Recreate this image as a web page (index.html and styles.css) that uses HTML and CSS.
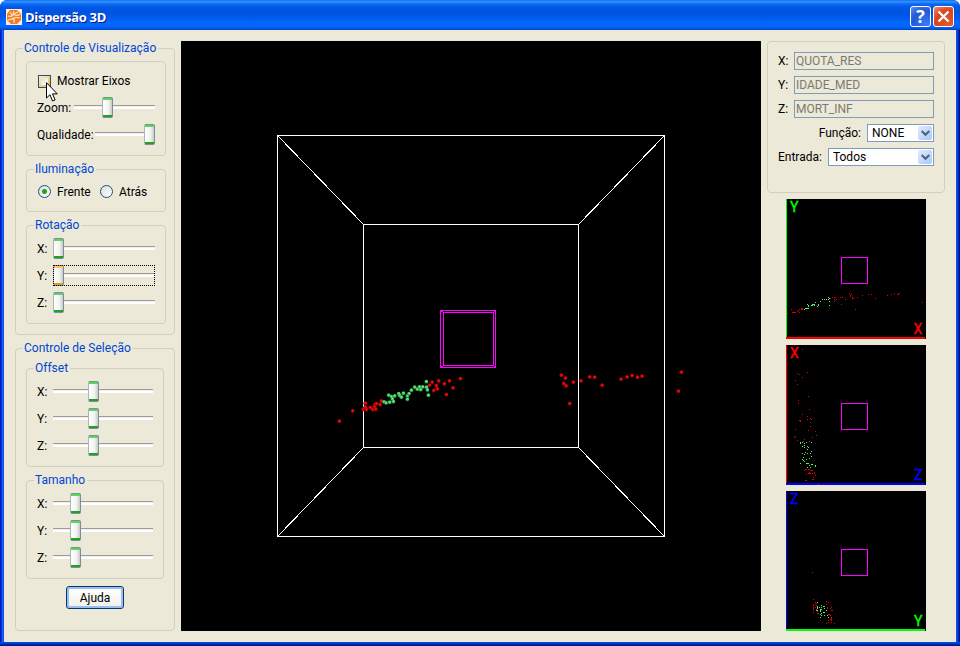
FILE: index.html
```html
<!DOCTYPE html>
<html lang="pt">
<head>
<meta charset="utf-8">
<title>Dispersão 3D</title>
<link rel="stylesheet" href="styles.css">
</head>
<body>
<div class="window">
  <header class="titlebar">
    <svg class="app-icon" width="16" height="16" viewBox="0 0 16 16"><rect width="16" height="16" fill="#f8eedc"/><path d="M4 1h7l4 4v6l-4 4H5l-4-4V5z" fill="#f47b20"/><path d="M2 7q3 1 5-1t5-3M8 2q-2 3 1 4t5-1M2 11q4-1 6-2t6 0M7 9q2 2 1 5M4 3l2 3" fill="none" stroke="#ffe9c8" stroke-width="1.1"/></svg>
    <h1 class="title">Dispersão 3D</h1>
    <button class="caption help" aria-label="Ajuda"><span>?</span></button>
    <button class="caption close" aria-label="Fechar"><svg width="19" height="19" viewBox="0 0 19 19"><path d="M4.500 4.500l10 10M14.500 4.500l-10 10" stroke="#fff" stroke-width="2.300"/></svg></button>
  </header>
  <main class="content">
    <aside class="left">
      <section class="group view">
        <h2 class="legend"><span class="t-view">Controle de Visualização</span></h2>
        <div class="group inner general">
          <label class="row check-row"><i class="checkbox"></i><span class="t-axes">Mostrar Eixos</span>
            <svg class="cursor" width="13" height="21" viewBox="0 0 13 21"><path d="M.5.700v15.300l3.500-3.300 2.500 6.300 2.600-1.100-2.600-6h4.800z" fill="#fff" stroke="#000"/></svg></label>
          <div class="row"><span class="name t-zoom">Zoom:</span><div class="slider zoom"><i class="thumb"></i></div></div>
          <div class="row"><span class="name t-quality">Qualidade:</span><div class="slider quality"><i class="thumb"></i></div></div>
        </div>
        <div class="group inner light">
          <h3 class="legend"><span class="t-light">Iluminação</span></h3>
          <div class="radios"><i class="radio on"></i><span class="t-front">Frente</span><i class="radio"></i><span class="t-back">Atrás</span></div>
        </div>
        <div class="group inner axes rotation">
          <h3 class="legend"><span class="t-rot">Rotação</span></h3>
          <div class="row"><span class="axis">X:</span><div class="slider"><i class="thumb"></i></div></div>
          <div class="row"><span class="axis">Y:</span><div class="slider focused"><i class="thumb hot"></i></div></div>
          <div class="row"><span class="axis">Z:</span><div class="slider"><i class="thumb"></i></div></div>
        </div>
      </section>
      <section class="group selection">
        <h2 class="legend"><span class="t-sel">Controle de Seleção</span></h2>
        <div class="group inner axes offset">
          <h3 class="legend"><span class="t-off">Offset</span></h3>
          <div class="row"><span class="axis">X:</span><div class="slider"><i class="thumb"></i></div></div>
          <div class="row"><span class="axis">Y:</span><div class="slider"><i class="thumb"></i></div></div>
          <div class="row"><span class="axis">Z:</span><div class="slider"><i class="thumb"></i></div></div>
        </div>
        <div class="group inner axes size">
          <h3 class="legend"><span class="t-size">Tamanho</span></h3>
          <div class="row"><span class="axis">X:</span><div class="slider"><i class="thumb"></i></div></div>
          <div class="row"><span class="axis">Y:</span><div class="slider"><i class="thumb"></i></div></div>
          <div class="row"><span class="axis">Z:</span><div class="slider"><i class="thumb"></i></div></div>
        </div>
        <button class="button">Ajuda</button>
      </section>
    </aside>
    <svg class="scene" width="580" height="590" viewBox="0 0 580 590">
      <defs>
        <radialGradient id="red" cx=".55" cy=".4" r=".6"><stop offset="0" stop-color="#ff1616"/><stop offset=".55" stop-color="#cc0000"/><stop offset="1" stop-color="#600"/></radialGradient>
        <radialGradient id="green" cx=".55" cy=".4" r=".6"><stop offset="0" stop-color="#70ff8c"/><stop offset=".55" stop-color="#40c060"/><stop offset="1" stop-color="#1c602c"/></radialGradient>
      </defs>
      <g fill="none" stroke="#fff" shape-rendering="crispEdges">
        <rect x="96.500" y="94.500" width="387" height="401"/>
        <rect x="182.500" y="183.500" width="215" height="223"/>
        <path d="M96.500 94.500l86 89M483.500 94.500l-86 89M96.500 495.500l86-89M483.500 495.500l-86-89"/>
      </g>
      <g fill="none" stroke="#f0f" shape-rendering="crispEdges">
        <rect x="259.500" y="269.500" width="55" height="57"/>
        <rect x="262.500" y="271.500" width="50" height="53"/>
        <path d="M259.500 269.500l3 2M314.500 269.500l-2 2M259.500 326.500l3-2M314.500 326.500l-2-2"/>
      </g>
      <g id="spheres"></g>
    </svg>
    <aside class="right">
      <section class="group vars">
        <div class="field"><span class="axis">X:</span><div class="input"><span class="t-quota">QUOTA_RES</span></div></div>
        <div class="field"><span class="axis">Y:</span><div class="input"><span class="t-idade">IDADE_MED</span></div></div>
        <div class="field"><span class="axis">Z:</span><div class="input"><span class="t-mort">MORT_INF</span></div></div>
        <div class="field"><span class="t-func">Função:</span><div class="select short"><span class="t-none">NONE</span><i class="arrow"><svg width="9" height="7" viewBox="0 0 9 7"><path d="M.7 1l3.800 3.800L8.300 1" fill="none" stroke="#4d6185" stroke-width="2.200"/></svg></i></div></div>
        <div class="field"><span class="t-entry">Entrada:</span><div class="select"><span class="t-all">Todos</span><i class="arrow"><svg width="9" height="7" viewBox="0 0 9 7"><path d="M.7 1l3.800 3.800L8.300 1" fill="none" stroke="#4d6185" stroke-width="2.200"/></svg></i></div></div>
      </section>
      <svg class="mini" width="140" height="140"><path class="g" d="M0 0h1v140H0z"/><path class="r" d="M0 138h139v2H0z"/><rect class="cube" x="55.500" y="58.500" width="26" height="26"/><text class="g" x="4" y="13">Y</text><text class="r" x="127.500" y="135">X</text><g id="xy"></g></svg>
      <svg class="mini" width="140" height="140"><path class="r" d="M0 0h1v140H0z"/><path class="b" d="M0 138h139v2H0z"/><rect class="cube" x="55.500" y="58.500" width="26" height="26"/><text class="r" x="4" y="13">X</text><text class="b" x="128" y="135">Z</text><g id="zx"></g></svg>
      <svg class="mini" width="140" height="140"><path class="b" d="M0 0h1v140H0z"/><path class="g" d="M0 138h139v2H0z"/><rect class="cube" x="55.500" y="58.500" width="26" height="26"/><text class="b" x="4" y="13">Z</text><text class="g" x="128" y="135">Y</text><g id="yz"></g></svg>
    </aside>
  </main>
</div>
<script src="plot.js"></script>
</body>
</html>
```
FILE: plot.js
```js
// Each list holds x,y pairs in thirds of a pixel.
const spheres = {
  red: [28,364, 68,333, 100,328, 106,310, 106,322, 109,329, 121,323, 128,329, 134,314, 134,321, 137,328, 139,311, 150,314, 154,303, 298,256, 306,247, 311,272, 319,257, 322,267, 326,243, 343,252, 349,284, 358,243, 369,264,
    391,236, 394,226, 401,251, 406,235, 408,258, 419,311, 430,247, 453,243, 479,231, 494,232, 516,256, 573,238, 591,231, 606,227, 622,232, 636,229, 745,274, 754,217],
  green: [162,306, 168,309, 176,286, 179,307, 184,290, 187,297, 190,305, 194,288, 206,281, 209,287, 214,292, 220,280, 232,298, 232,288, 237,281, 244,271, 254,262, 262,268, 268,261, 272,269, 278,261, 289,245, 289,262, 292,270, 295,286]
};
const plots = {
  xy: {
    red: [4,344,22,340,24,340,27,340,33,334,37,337,40,331,46,328,49,328,46,331,49,331,134,298,140,295,145,295,149,295,145,301,152,301,145,307,163,295,169,295,166,316,178,301,190,283,193,289,196,286,193,292,198,298,202,298,199,295,214,295,229,289,247,286,256,286,268,298,304,289,316,286,325,283,334,286,337,286,340,283,409,310,208,331,16,331,19,340,40,340,34,334],
    green: [55,331,58,328,61,328,64,328,67,328,64,316,67,322,76,319,80,316,83,316,86,316,88,310,95,322,98,316,98,319,103,307,110,301,115,301,121,301,127,301,127,295,130,298,130,307,130,319,67,319,79,319,85,319]
  },
  zx: {
    red: [25,1,49,13,64,82,34,85,40,88,49,97,28,106,34,118,67,154,37,166,37,175,70,193,49,208,64,214,73,220,76,223,64,223,40,226,43,226,43,229,73,232,73,244,28,253,67,256,88,259,91,271,79,277,28,274,25,277,34,286,55,283,70,289,52,289,58,373,61,373,67,373,70,373,55,376,76,376,79,376,70,382,67,385,70,385,73,385,79,385,61,388,85,382,85,385,88,391,82,397,79,403,82,403,58,406,61,406,97,418],
    green: [43,292,43,295,49,292,55,295,61,292,76,292,55,301,49,304,55,307,64,304,67,307,64,313,76,319,49,325,55,328,58,322,64,325,73,325,52,337,61,343,70,340,76,334,49,343,52,346,55,349,43,355,61,355,64,355,67,355,70,361,76,358,79,358,88,361,88,364,64,367,73,367]
  },
  yz: {
    red: [79,244,82,325,88,334,91,337,82,340,88,340,82,343,91,343,82,349,82,352,88,349,82,355,91,355,82,364,94,361,97,367,94,367,121,331,127,334,121,340,124,349,124,352,136,349,133,352,136,358,139,358,127,370,133,373,130,370,136,379,136,382,133,385,127,388,136,388,127,394,121,397,136,394,145,397,136,385],
    green: [94,334,94,346,94,349,100,349,106,343,106,349,91,358,94,358,94,352,103,355,106,355,103,358,103,361,112,346,115,346,115,352,112,364,115,364,121,358,106,367,103,370,106,373,115,373,124,373,103,379,127,379]
  }
};
const add = (id, tag, attrs) => {
  const el = document.createElementNS('http://www.w3.org/2000/svg', tag);
  for (const k in attrs) el.setAttribute(k, attrs[k]);
  document.getElementById(id).append(el);
};
for (const color in spheres) {
  const p = spheres[color];
  for (let i = 0; i < p.length; i += 2)
    add('spheres', 'circle', { cx: 149 + (p[i] + (color === 'red' && i >= 48 && 0)) / 3 + (color === 'red' && i > 48 ? 100 : 0), cy: 259 + p[i + 1] / 3, r: 2, fill: `url(#${color})` });
}
for (const id in plots)
  for (const color in plots[id]) {
    const p = plots[id][color];
    let d = '';
    for (let i = 0; i < p.length; i += 2) d += `M${Math.floor(p[i] / 3)} ${Math.floor(p[i + 1] / 3)}h1v1h-1z`;
    add(id, 'path', { d, fill: color === 'red' ? '#e00000' : '#55f070' });
  }
```
FILE: styles.css
```css
* { box-sizing: border-box; }
body { margin: 0; background: #fff; font: 12px/14px Roboto, "Liberation Sans", sans-serif; color: #000; }
h1, h2, h3 { margin: 0; font: inherit; }
i { display: block; flex: none; }
svg { display: block; flex: none; }
span { white-space: nowrap; }
.window { width: 960px; height: 646px; display: flex; flex-direction: column; background: linear-gradient(90deg, #0019cf 0 1px, #0831d9 1px 2px, #1666ee 2px 3px, #0855dd 3px 957px, #0046e0 957px 958px, #0028b8 958px 959px, #00138c 959px); border-radius: 7px 7px 0 0; overflow: hidden; }
.titlebar { height: 30px; display: flex; align-items: center; padding: 3px 6px 0; background: linear-gradient(#0058e6 0, #3a93ff 1px, #288eff 2px, #0c6cf4 4px, #0058e6 7px, #0053df 12px, #0058ea 17px, #0366fc 22px, #0267ff 26px, #005cec 28px, #0042c4 30px); }
.title { flex: 1; margin-left: 3px; color: #fff; font: 700 13px/18px "Open Sans", sans-serif; text-shadow: 1px 1px #0a1883; letter-spacing: -.3px; }
.caption { width: 21px; height: 21px; padding: 0; margin-left: 2px; border: 1px solid #fff; border-radius: 3px; color: #fff; }
.help { background: radial-gradient(circle at 80% 90%, #3e7bf4, #2458d6 60%, #5a8bee); font: 700 18px/19px "Open Sans", sans-serif; }
.close { background: radial-gradient(circle at 80% 90%, #e35a2a, #d9431d 60%, #ee8d6c); }
.content { flex: none; width: 952px; height: 612px; margin-left: 4px; padding: 11px 11px 11px; display: flex; background: #ece9d8; }
.window::after { content: ""; flex: 1; background: linear-gradient(#0855dd, #0042d8 25%, #0028b0 60%, #00138c); }
.left { width: 160px; padding-top: 7px; }
.group { position: relative; border: 1px solid #d0d0bf; border-radius: 4px; }
.legend { position: absolute; left: 7px; top: -8px; height: 14px; padding: 0 2px 0 1px; background: #ece9d8; color: #0046d5; }
.view { height: 287px; padding: 12px 0 0 10px; }
.selection { height: 283px; margin-top: 13px; padding: 19px 0 0 10px; }
.inner { width: 140px; }
.general { height: 95px; padding: 6px 10px 0; }
.row { display: flex; align-items: center; height: 27px; }
.check-row { position: relative; height: 26px; padding-left: 1px; }
.checkbox { width: 13px; height: 13px; margin-right: 6px; border: 1px solid #1c5180; background: linear-gradient(135deg, #dcdcd7, #fff) center / 7px 7px no-repeat, linear-gradient(135deg, #fff0cf, #f8b330); }
.cursor { position: absolute; left: 9px; top: 14px; z-index: 2; }
.slider { position: relative; flex: 1; height: 21px; background: linear-gradient(#9d9c99 0 1px, #f0efea 1px 2px, #fff 2px) 0 8px / 100% 4px no-repeat; }
.name + .slider { flex: none; margin-left: auto; margin-right: 0; }
.slider.zoom { width: 81px; }
.slider.quality { width: 60px; }
.slider { --at: 0px; }
.slider.zoom { --at: 28px; }
.slider.quality { --at: 49px; }
.offset .slider { --at: 35px; }
.size .slider { --at: 17px; }
.thumb { position: absolute; left: var(--at); top: 0; width: 11px; height: 21px; border: 1px solid #7d8e9b; border-left-color: #a8b5bd; border-radius: 2px; background: linear-gradient(#5bd65b 0 2px, transparent 2px 17px, #21a121 17px), linear-gradient(90deg, #fff, #f3f3ef 60%, #c9cbc9); }
.thumb.hot { background: linear-gradient(#ffc65c 0 2px, transparent 2px 17px, #e59a1c 17px), linear-gradient(90deg, #fff, #f3f3ef 60%, #c9cbc9); }
.focused::after { content: ""; position: absolute; inset: 0; border: 1px dotted #000; }
.light { height: 43px; margin-top: 13px; padding: 15px 0 0 11px; }
.radios { display: flex; align-items: center; height: 13px; }
.radio { width: 13px; height: 13px; margin-right: 6px; border: 1px solid #1c5180; border-radius: 50%; background: linear-gradient(135deg, #dcdcd7, #fff); }
.radio.on { background: radial-gradient(circle, #21a121 0 2px, transparent 3px), linear-gradient(135deg, #dcdcd7, #fff); }
.t-front { width: 43px; }
.axes { height: 99px; padding: 9px 10px 0; }
.rotation { margin-top: 13px; }
.offset, .size { width: 138px; }
.size { margin-top: 13px; }
.axis { width: 16px; flex: none; }
.button { display: block; width: 58px; height: 23px; margin: 7px 0 0 40px; padding: 0; border: 1px solid #003c74; border-radius: 3px; background: linear-gradient(#fff, #f0f0ea); box-shadow: inset 0 0 0 2px #9ebcf0; font: inherit; color: #000; }
.scene { margin-left: 6px; background: #000; }
.right { width: 178px; margin-left: 6px; display: flex; flex-direction: column; align-items: center; gap: 6px; }
.vars { width: 178px; height: 152px; padding: 10px 10px 0; display: flex; flex-direction: column; gap: 6px; }
.field { height: 18px; display: flex; align-items: center; justify-content: flex-end; }
.input { width: 140px; height: 18px; padding: 1px 1px; border: 1px solid #7f9db9; color: #7b7970; }
.select { width: 110px; height: 18px; margin-left: 6px; padding: 0 1px 0 4px; display: flex; align-items: center; justify-content: space-between; border: 1px solid #7f9db9; background: #fff; }
.select.short { width: 67px; }
.arrow { width: 14px; height: 14px; display: grid; place-items: center; border-radius: 2px; background: linear-gradient(135deg, #e1eafe, #aec8f7); }
.mini { background: #000; }
.mini path { shape-rendering: crispEdges; }
.mini text { font: 400 14px Roboto, sans-serif; stroke-width: .4px; stroke: currentColor; }
.r { fill: #f00; color: #f00; }
.g { fill: #0f0; color: #0f0; }
.b { fill: #00f; color: #00f; }
.cube { fill: none; stroke: #f0f; shape-rendering: crispEdges; }
```
